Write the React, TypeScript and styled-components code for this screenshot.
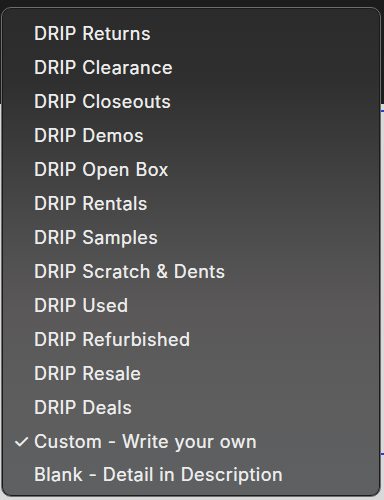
import styled, { createGlobalStyle } from "styled-components";

const GlobalStyle = createGlobalStyle`
  html, body {
    margin: 0;
    padding: 0;
    width: 384px;
    height: 500px;
    overflow: hidden;
  }
  body {
    font-family: Inter, "Liberation Sans", sans-serif;
    -webkit-font-smoothing: antialiased;
  }
`;

/* ── Layout ──────────────────────────────────────────── */

const Backdrop = styled.div`
  width: 384px;
  height: 500px;
  box-sizing: border-box;
  padding: 7px 3px 0 1px;
  background: linear-gradient(to bottom, #1c1c1c 0, #1c1c1c 104px, #d9d9d9 104px, #d9d9d9 100%);
  position: relative;
`;

const SideLine = styled.div<{ $top: number }>`
  position: absolute;
  right: 0;
  top: ${(p) => p.$top}px;
  width: 3px;
  height: 2px;
  background: #2b3fd0;
`;

const Menu = styled.div`
  height: 490px;
  box-sizing: border-box;
  border-radius: 10px;
  border: 1px solid #6e6e6e;
  box-shadow: inset 0 0 0 1px #1a1a1a;
  background: linear-gradient(
    to bottom,
    #2b2b2b 0%,
    #2f2f2f 15%,
    #3d3d3d 30%,
    #4f4e4e 48%,
    #5a5858 62%,
    #5d5d5d 78%,
    #5f6062 100%
  );
  padding: 9px 0 4px;
  display: flex;
  flex-direction: column;
`;

const Item = styled.div`
  height: 34px;
  display: flex;
  align-items: center;
  padding-left: 12px;
  color: #ececec;
  font-size: 18px;
  font-weight: 400;
  letter-spacing: 0.45px;
  white-space: nowrap;
  text-shadow: 0 0 0.4px #ececec;
`;

const Check = styled.span`
  width: 20px;
  margin-left: -1px;
  padding-right: 1px;
  flex: none;
  font-size: 19px;
  line-height: 1;
  color: #ececec;
`;

/* ── Data ────────────────────────────────────────────── */

const ITEMS = [
  "DRIP Returns",
  "DRIP Clearance",
  "DRIP Closeouts",
  "DRIP Demos",
  "DRIP Open Box",
  "DRIP Rentals",
  "DRIP Samples",
  "DRIP Scratch & Dents",
  "DRIP Used",
  "DRIP Refurbished",
  "DRIP Resale",
  "DRIP Deals",
  "Custom - Write your own",
  "Blank - Detail in Description",
];

const SELECTED = "Custom - Write your own";

export default function App() {
  return (
    <>
      <GlobalStyle />
      <Backdrop>
        <SideLine $top={110} />
        <SideLine $top={453} />
        <Menu>
          {ITEMS.map((label) => (
            <Item key={label}>
              <Check>{label === SELECTED ? "✓" : ""}</Check>
              {label}
            </Item>
          ))}
        </Menu>
      </Backdrop>
    </>
  );
}
